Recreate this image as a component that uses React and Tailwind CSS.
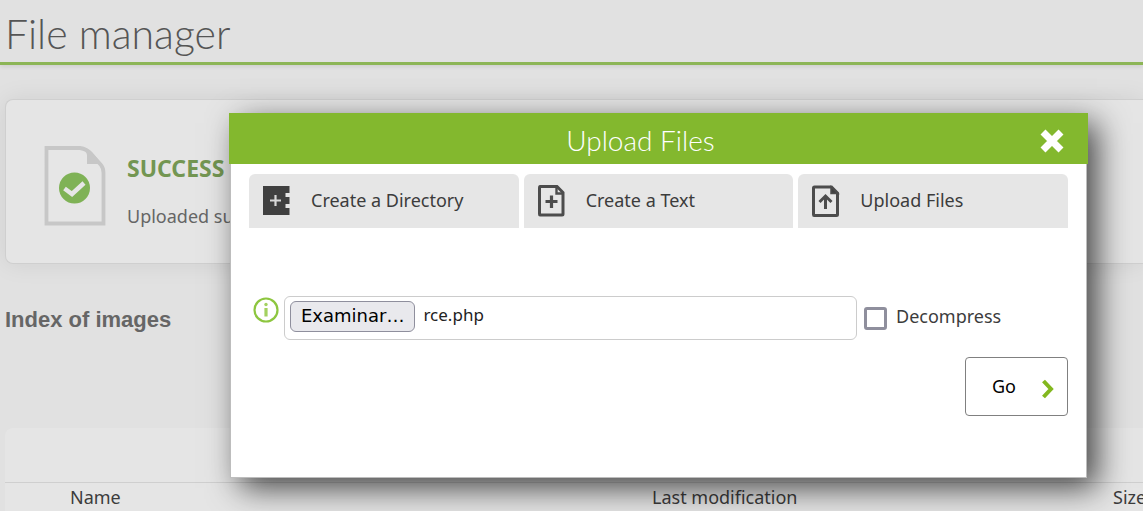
import React from "react";

function SuccessIcon() {
  return (
    <svg width="62" height="80" viewBox="0 0 62 80" aria-hidden="true">
      <path d="M2.500 2H36Q43 3 47 8L57 19Q59.500 22 59.500 27V77.500H2.500Z" fill="#e6e6e6" stroke="#c7c7c7" strokeWidth="3.800" />
      <path d="M36 1Q44 2 48 6L58 18H43V9Q42 4 36 1Z" fill="#c7c7c7" />
      <circle cx="30.500" cy="42" r="15.500" fill="#7fb256" />
      <path d="M20.500 42.500L28 48L40 37" fill="none" stroke="#e6e6e6" strokeWidth="4.500" />
    </svg>
  );
}

function DirectoryIcon() {
  return (
    <svg width="28" height="32" viewBox="0 0 28 32" aria-hidden="true">
      <path d="M0 1H26.500V8H22.500V12H26.500V19H22.500V23H26.500V30H0Z" fill="#404040" />
      <path d="M12.500 10V21M7 15.500H18" stroke="#d8d8d8" strokeWidth="2.200" />
    </svg>
  );
}

function TextIcon() {
  return (
    <svg width="28" height="32" viewBox="0 0 28 32" fill="none" stroke="#4c4c4c" aria-hidden="true">
      <path d="M2 1.500H19L25 7.500V29Q25 30 24 30H2Q1.500 30 1.500 29V3Q1.500 1.500 2 1.500Z" strokeWidth="3" />
      <path d="M18.500 2V8.500H25" strokeWidth="2.400" />
      <path d="M13.500 10.500V23M7.500 16.500H19.500" strokeWidth="3.200" />
    </svg>
  );
}

function UploadIcon() {
  return (
    <svg width="28" height="32" viewBox="0 0 28 32" fill="none" stroke="#4c4c4c" aria-hidden="true">
      <path d="M2.500 2H19.500L25.500 8V29.500Q25.500 30.500 24.500 30.500H2Q1.500 30.500 1.500 29.500V3Q1.500 2 2.500 2Z" strokeWidth="3" />
      <path d="M19 2V8.500H26Z" fill="#404040" strokeWidth="1.500" />
      <path d="M13.500 24V11M7.500 17L13.500 11L19.500 17" strokeWidth="3" />
    </svg>
  );
}

function InfoIcon() {
  return (
    <svg width="26" height="28" viewBox="0 0 26 28" className="shrink-0" aria-hidden="true">
      <circle cx="13" cy="14" r="11.500" fill="none" stroke="#8dc63f" strokeWidth="2.200" />
      <circle cx="13" cy="8.500" r="1.700" fill="#a3d160" />
      <path d="M13 12V20.500" stroke="#a3d160" strokeWidth="3.200" />
    </svg>
  );
}

const tabs = [
  { label: "Create a Directory", Icon: DirectoryIcon },
  { label: "Create a Text", Icon: TextIcon },
  { label: "Upload Files", Icon: UploadIcon },
];

function UploadDialog() {
  return (
    <section
      role="dialog"
      aria-labelledby="dialog-title"
      className="absolute left-[229px] right-[55px] top-[113px]"
    >
      <header className="relative flex h-[51px] items-center bg-[#83b82e] pl-3 pr-6 text-white">
        <h2 id="dialog-title" className="flex-1 pt-[2px] text-center font-[Lato,sans-serif] text-[28px] font-light">
          Upload Files
        </h2>
        <button type="button" aria-label="Close" className="pt-1">
          <svg width="24" height="24" viewBox="0 0 24 24" aria-hidden="true">
            <path d="M3 3L21 21M21 3L3 21" stroke="white" strokeWidth="7" />
          </svg>
        </button>
      </header>
      <div className="mx-px -mt-[51px] min-h-[365px] border border-[#bdbdbd] bg-white px-[18px] pt-[60px] shadow-[10px_10px_30px_0_rgba(0,0,0,0.7)]">
        <nav className="grid grid-cols-3 gap-[5px]">
          {tabs.map(({ label, Icon }) => (
            <button key={label} type="button" className="flex h-[54px] items-center gap-5 rounded-t-md bg-[#e6e6e6] px-[14px]">
              <Icon />
              <span className="pb-[2px]">{label}</span>
            </button>
          ))}
        </nav>
        <form className="pt-[68px]" onSubmit={(e) => e.preventDefault()}>
          <div className="flex items-start gap-[5px] pl-1">
            <InfoIcon />
            <div className="flex h-11 flex-1 items-start gap-2 rounded-md border border-[#ccc] px-[5px] pt-1 text-black">
              <input id="upload" type="file" className="sr-only" />
              <label
                htmlFor="upload"
                className="flex h-[31px] items-center rounded-md border border-[#8f8f9d] bg-[#e9e9ed] px-[10px] pb-[2px] font-['DejaVu_Sans',sans-serif] text-[18px]"
              >
                Examinar…
              </label>
              <span className="text-[17px] leading-7 text-[#222]">rce.php</span>
            </div>
            <label className="flex w-[206px] items-center gap-[9px] pl-[2px] pt-[6px]">
              <input type="checkbox" className="mt-[5px] size-[23px] appearance-none rounded-[3px] border-3 border-[#8f8f9d] bg-white checked:bg-[#83b82e]" />
              <span>Decompress</span>
            </label>
          </div>
          <div className="flex justify-end pt-[17px]">
            <button type="submit" className="flex h-[59px] items-center gap-[26px] rounded-sm border border-[#808080] pl-[26px] pr-[13px] text-black">
              Go
              <svg width="12" height="20" viewBox="0 0 12 20" className="mt-1" aria-hidden="true">
                <path d="M1.500 2L9 10L1.500 18" fill="none" stroke="#83b81f" strokeWidth="4" />
              </svg>
            </button>
          </div>
        </form>
      </div>
    </section>
  );
}

export default function App() {
  return (
    <div className="relative min-h-screen overflow-hidden bg-[#e1e1e1] font-['Noto_Sans','Open_Sans',sans-serif] text-[18px] text-[#3c3c3c]">
      <header className="flex h-[65px] items-center border-b-3 border-[#8cb556] px-[5px] shadow-[0_2px_4px_rgba(0,0,0,0.08)]">
        <h1 className="pt-[6px] font-[Lato,sans-serif] text-[41px] font-light leading-[50px] text-[#555]">File manager</h1>
      </header>
      <main className="pl-[5px] pt-[34px]">
        <section className="flex h-[165px] items-center gap-[21px] rounded-l-lg border border-r-0 border-[#cfcfcf] bg-[#e5e5e5] pl-[38px] pt-2 shadow-[0_0_24px_rgba(0,0,0,0.08)]">
          <SuccessIcon />
          <div className="pt-3">
            <h2 className="text-[23px] font-bold leading-[30px] text-[#739652]">SUCCESS</h2>
            <p className="pt-[18px] leading-[30px] text-[#666]">Uploaded successfully</p>
          </div>
        </section>
        <h2 className="pt-10 font-['Liberation_Sans',sans-serif] text-[22px] font-bold leading-8 text-[#666]">Index of images</h2>
        <div className="mt-[92px] rounded-tl-lg bg-[#e5e5e5] pt-[54px]">
          <table className="w-full table-fixed border-t border-[#cfcfcf] text-left leading-[28px]">
            <thead>
              <tr>
                <td className="w-[65px]" />
                <th className="font-normal">Name</th>
                <th className="w-[461px] font-normal">Last modification</th>
                <th className="w-[30px] font-normal">Size</th>
              </tr>
            </thead>
          </table>
        </div>
      </main>
      <UploadDialog />
    </div>
  );
}
